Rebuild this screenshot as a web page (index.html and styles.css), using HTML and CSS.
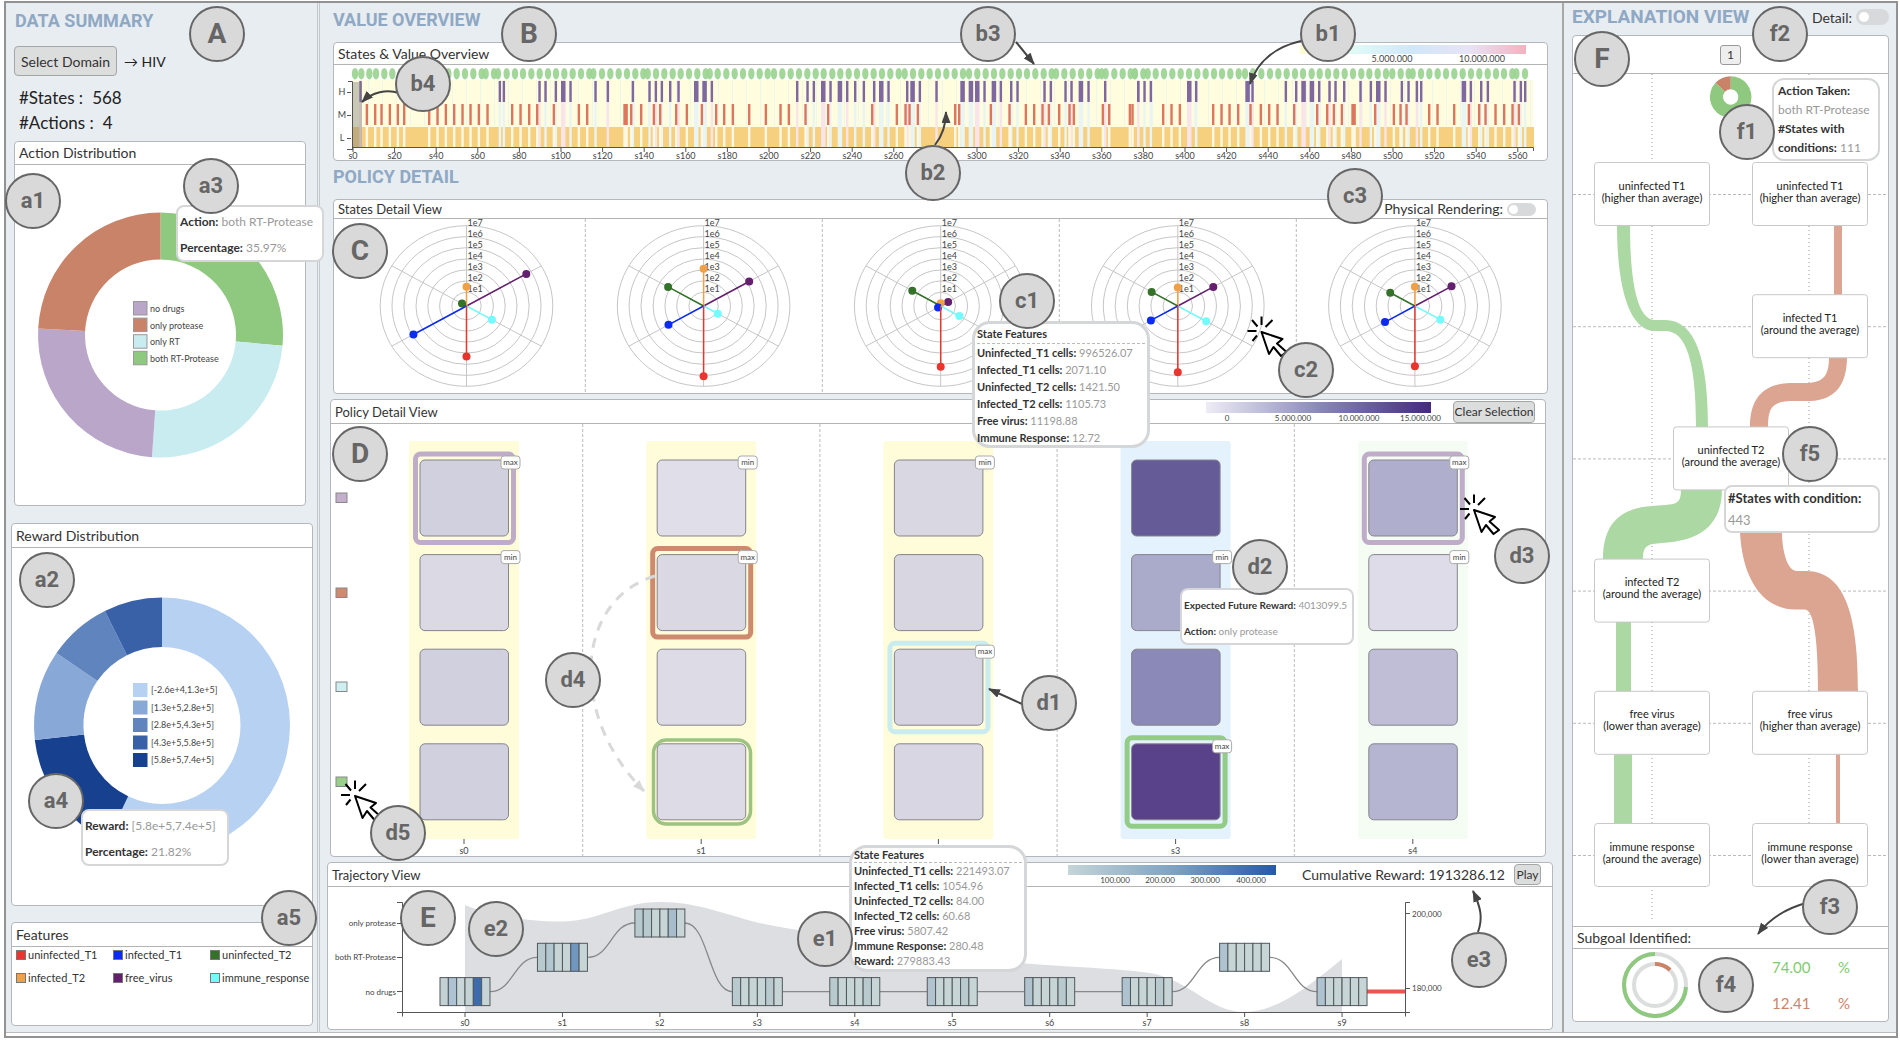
FILE: index.html
```html
<!DOCTYPE html>
<html lang="en">
<head>
<meta charset="utf-8">
<title>Policy Explorer</title>
<link rel="stylesheet" href="styles.css">
</head>
<body>
<div class="page">
  <div class="dashboard">
    <aside class="sidebar">
      <h2 class="title">DATA SUMMARY</h2>
      <div class="domain"><button type="button" class="btn btn-domain">Select Domain</button><span>→ HIV</span></div>
      <dl class="stats">
        <div><dt>#States :</dt><dd>568</dd></div>
        <div><dt>#Actions :</dt><dd>4</dd></div>
      </dl>
      <section class="card card-action">
        <h3 class="card-head">Action Distribution</h3>
        <svg class="chart" id="action-donut" viewBox="15 165 290 340"></svg>
      </section>
      <section class="card card-reward">
        <h3 class="card-head">Reward Distribution</h3>
        <svg class="chart" id="reward-donut" viewBox="12 548 300 357"></svg>
      </section>
      <section class="card card-features">
        <h3 class="card-head">Features</h3>
        <ul class="features">
          <li><i class="sw sw-red"></i>uninfected_T1</li>
          <li><i class="sw sw-blue"></i>infected_T1</li>
          <li><i class="sw sw-green"></i>uninfected_T2</li>
          <li><i class="sw sw-orange"></i>infected_T2</li>
          <li><i class="sw sw-purple"></i>free_virus</li>
          <li><i class="sw sw-cyan"></i>immune_response</li>
        </ul>
      </section>
    </aside>

    <main class="main">
      <h2 class="title">VALUE OVERVIEW</h2>
      <section class="card card-overview">
        <div class="card-head">
          <h3>States &amp; Value Overview</h3>
          <svg class="scale" width="226" height="20" viewBox="1300 45 226 20">
            <defs><linearGradient id="g-value"><stop offset="0" stop-color="#fffbd0"/><stop offset=".25" stop-color="#dff9f8"/><stop offset=".5" stop-color="#d0e7f8"/><stop offset=".75" stop-color="#e8e3f6"/><stop offset="1" stop-color="#f3b2bf"/></linearGradient></defs>
            <rect x="1300" y="46" width="226" height="9" fill="url(#g-value)"/>
            <text class="tick mid" x="1392" y="63">5.000.000</text><text class="tick mid" x="1482" y="63">10.000.000</text>
          </svg>
        </div>
        <svg class="chart" id="overview" viewBox="334 65 1213 95"></svg>
      </section>
      <h2 class="title title-policy">POLICY DETAIL</h2>
      <section class="card card-states">
        <div class="card-head">
          <h3>States Detail View</h3>
          <label class="switch">Physical Rendering:<input type="checkbox"></label>
        </div>
        <svg class="chart" id="radials" viewBox="334 219 1213 174"></svg>
      </section>
      <section class="card card-policy">
        <div class="card-head">
          <h3>Policy Detail View</h3>
          <svg class="scale" width="236" height="22" viewBox="1206 401 236 22">
            <defs><linearGradient id="g-policy"><stop offset="0" stop-color="#eeecf5"/><stop offset=".25" stop-color="#bdbcd9"/><stop offset=".5" stop-color="#8a88b9"/><stop offset=".75" stop-color="#655a9b"/><stop offset="1" stop-color="#452a7c"/></linearGradient></defs>
            <rect x="1206" y="402" width="225" height="11" fill="url(#g-policy)"/>
            <text class="tick-sm mid" x="1227" y="421">0</text><text class="tick-sm mid" x="1293" y="421">5.000.000</text><text class="tick-sm mid" x="1359" y="421">10.000.000</text><text class="tick-sm end" x="1441" y="421">15.000.000</text>
          </svg>
          <button type="button" class="btn btn-clear">Clear Selection</button>
        </div>
        <svg class="chart" id="policy" viewBox="331 424 1214 432"></svg>
      </section>
      <section class="card card-trajectory">
        <div class="card-head">
          <h3>Trajectory View</h3>
          <svg class="scale" width="208" height="21" viewBox="1069 865 208 21">
            <defs><linearGradient id="g-traj"><stop offset="0" stop-color="#c5d5d8"/><stop offset=".5" stop-color="#7fa3c2"/><stop offset="1" stop-color="#2659a6"/></linearGradient></defs>
            <rect x="1069" y="866" width="208" height="10" fill="url(#g-traj)"/>
            <text class="tick-sm mid" x="1116" y="884">100.000</text><text class="tick-sm mid" x="1161" y="884">200.000</text><text class="tick-sm mid" x="1206" y="884">300.000</text><text class="tick-sm mid" x="1252" y="884">400.000</text>
          </svg>
          <span class="cumulative">Cumulative Reward: <output>1913286.12</output></span>
          <button type="button" class="btn btn-play">Play</button>
        </div>
        <svg class="chart" id="trajectory" viewBox="328 887 1224 142"></svg>
      </section>
    </main>

    <aside class="explain">
      <div class="explain-top">
        <h2 class="title title-wide">EXPLANATION VIEW</h2>
        <label class="switch switch-lg">Detail:<input type="checkbox"></label>
      </div>
      <section class="card card-explain">
        <div class="card-head step-head"><button type="button" class="step">1</button></div>
        <svg class="chart" id="flow" viewBox="1573 74 315 852"></svg>
        <h3 class="subgoal">Subgoal Identified:</h3>
        <div class="goal">
          <svg width="68" height="68" viewBox="-34 -34 68 68">
            <circle class="ring" r="31"/><circle class="ring" r="21"/>
            <path class="arc-green" d="M0 -31A31 31 0 1 0 31 2"/>
            <path class="arc-brown" d="M0 -21A21 21 0 0 1 15 -15"/>
          </svg>
          <dl class="rates">
            <div class="rate-green"><dt>74.00</dt><dd>%</dd></div>
            <div class="rate-brown"><dt>12.41</dt><dd>%</dd></div>
          </dl>
        </div>
      </section>
    </aside>
  </div>

  <div class="notes" id="notes">
    <div class="tip tip-pair" data-x="176" data-y="205"><p><b>Action:</b> both RT-Protease</p><p><b>Percentage:</b> 35.97%</p></div>
    <div class="tip tip-pair" data-x="81" data-y="809"><p><b>Reward:</b> [5.8e+5,7.4e+5]</p><p><b>Percentage:</b> 21.82%</p></div>
    <div class="tip tip-state" data-x="972" data-y="321"><h4>State Features</h4>
      <p><b>Uninfected_T1 cells:</b> 996526.07</p><p><b>Infected_T1 cells:</b> 2071.10</p><p><b>Uninfected_T2 cells:</b> 1421.50</p><p><b>Infected_T2 cells:</b> 1105.73</p><p><b>Free virus:</b> 11198.88</p><p><b>Immune Response:</b> 12.72</p></div>
    <div class="tip tip-state tip-dense" data-x="849" data-y="845"><h4>State Features</h4>
      <p><b>Uninfected_T1 cells:</b> 221493.07</p><p><b>Infected_T1 cells:</b> 1054.96</p><p><b>Uninfected_T2 cells:</b> 84.00</p><p><b>Infected_T2 cells:</b> 60.68</p><p><b>Free virus:</b> 5807.42</p><p><b>Immune Response:</b> 280.48</p><p><b>Reward:</b> 279883.43</p></div>
    <div class="tip tip-pair tip-future" data-x="1180" data-y="588"><p><b>Expected Future Reward:</b> 4013099.5</p><p><b>Action:</b> only protease</p></div>
    <div class="tip tip-taken" data-x="1772" data-y="78"><p><b>Action Taken:</b></p><p>both RT-Protease</p><p><b>#States with</b></p><p><b>conditions:</b> 111</p></div>
    <div class="tip tip-cond" data-x="1724" data-y="485"><p><b>#States with condition:</b></p><p>443</p></div>
    <svg class="arrows" viewBox="0 0 1900 1038" preserveAspectRatio="none" id="arrows"></svg>
  </div>
</div>
<script src="script.js"></script>
</body>
</html>
```
FILE: styles.css
```css
* { box-sizing: border-box; }
body { margin: 0; background: #fff; color: #333; font-family: Lato, "Open Sans", sans-serif; font-size: 14px; }
h2, h3, h4, p, dl, dd, ul { margin: 0; padding: 0; font-weight: normal; }
ul { list-style: none; }

.page { position: relative; padding: 1px 2px 0 4px; }
.dashboard { display: grid; grid-template-columns: 314px minmax(0, 1fr) 334px; border: 2px solid #929292; padding-bottom: 3px; background: #fff; }
.sidebar, .main, .explain { background: #e8edf2; border-bottom: 1px solid #bbb; }

.title { color: #8fa8c4; font: bold 18px/24px Roboto, sans-serif; }
.title-wide { font-size: 19px; }

.btn { padding: 0; border: 1px solid #a5a5a5; border-radius: 4px; background: #dcdddd; color: #333; font-family: inherit; font-size: 12px; white-space: nowrap; }
.btn-domain { width: 103px; height: 30px; font-size: 14px; }
.btn-clear { width: 82px; height: 22px; }
.btn-play { width: 27px; height: 21px; }

.card { border: 1px solid #b4b8bc; border-radius: 4px; background: #fff; overflow: hidden; }
.card-head { display: flex; align-items: center; border-bottom: 1px solid #b4b4b4; padding-left: 4px; height: 23px; font-size: 14px; line-height: 20px; color: #333; }
.card-head h3 { font-size: 14px; }
.chart { display: block; width: 100%; height: auto; overflow: visible; }
.scale { margin-left: auto; }

/* sidebar */
.sidebar { padding: 6px 4px 0 5px; border-right: 3px double #c4c8cc; }
.sidebar .title { padding-left: 4px; }
.domain { display: flex; align-items: center; gap: 7px; margin: 13px 0 0 3px; color: #222; }
.stats { margin: 9px 0 6px 8px; font-size: 17px; line-height: 25px; color: #222; }
.stats div { display: flex; gap: 9px; }
.card-action { margin: 0 7px 0 3px; }
.card-reward { margin-top: 17px; }
.card-features { margin-top: 16px; }
.card-reward .card-head, .card-features .card-head { height: 24px; }
.features { display: grid; grid-template-columns: 97px 97px 1fr; row-gap: 7px; padding: 0 0 39px 4px; font-size: 11px; line-height: 16px; }
.features li { display: flex; align-items: center; gap: 2px; white-space: nowrap; }
.sw { width: 10px; height: 10px; border: 1px solid #777; }
.sw-red { background: #e8352e; } .sw-blue { background: #0b2bf2; } .sw-green { background: #34722a; }
.sw-orange { background: #f0a047; } .sw-purple { background: #64206f; } .sw-cyan { background: #74fbfd; }

/* main column */
.main { padding: 5px 0 2px; }
.main .title { padding-left: 13px; }
.card-overview, .card-states { margin: 10px 14px 0 13px; }
.card-overview .card-head { height: 22px; }
.card-overview .scale { margin-right: 21px; }
.title-policy { margin-top: 4px; }
.card-states .card-head { height: 19px; }
.card-policy { margin: 5px 16px 0 10px; }
.card-policy .card-head, .card-trajectory .card-head { height: 24px; }
.card-policy .card-head { padding-right: 10px; gap: 11px; }
.card-trajectory { margin: 5px 9px 0 7px; }
.card-trajectory .card-head { padding-right: 11px; }
.card-states h3, .card-policy h3, .card-trajectory h3 { font-size: 13px; }
.cumulative { width: 201px; margin: 0 11px 0 26px; font-size: 14px; white-space: nowrap; }

.switch { display: flex; align-items: center; gap: 4px; margin: 0 11px 0 auto; font-size: 14px; }
.switch input { appearance: none; margin: 0; width: 29px; height: 13px; padding: 2px; border-radius: 7px; background: #d8d9da; }
.switch input::before { content: ""; display: block; width: 9px; height: 9px; border-radius: 50%; background: #fff; }
.switch-lg { margin-right: 0; }
.switch-lg input { width: 33px; height: 16px; padding: 3px; border-radius: 8px; }
.switch-lg input::before { width: 10px; height: 10px; }

/* explanation column */
.explain { padding: 2px 7px 0 8px; border-left: 2px solid #a8a8a8; }
.explain-top { display: flex; align-items: center; margin-bottom: 6px; height: 24px; }
.step-head { height: 38px; justify-content: center; padding: 0; }
.step { width: 21px; height: 20px; padding: 0; border: 1px solid #999; border-radius: 3px; background: #eee; color: #333; font: 12px Lato, sans-serif; }
.subgoal { border: solid #b4b4b4; border-width: 1px 0; padding-left: 4px; font-size: 14px; line-height: 21px; }
.goal { display: flex; align-items: center; gap: 83px; height: 72px; padding-left: 48px; font-size: 15px; }
.rates div { display: flex; line-height: 36px; }
.rates dt { width: 66px; }
.rate-green { color: #7fcb70; } .rate-brown { color: #cd8468; }
.ring { fill: none; stroke: #dcdddd; stroke-width: 4; }
.arc-green { fill: none; stroke: #8fc97f; stroke-width: 4; }
.arc-brown { fill: none; stroke: #c98369; stroke-width: 4; }

/* svg text and marks */
svg text { font-family: Lato, sans-serif; fill: #444; }
svg .tick { font-size: 9px; }
svg .tick-sm { font-size: 8px; }
svg .node { font-size: 11px; fill: #222; text-anchor: middle; }
svg .mid { text-anchor: middle; }
svg .end { text-anchor: end; }
.axis { stroke: #555; stroke-width: 1; fill: none; }
.grid { stroke: #c6c6c6; fill: none; }
.dash { stroke: #bbb; stroke-dasharray: 3 2; }
.dots { stroke: #ccc; stroke-width: 2; stroke-dasharray: 1 3; }
.box { fill: #fff; stroke: #c8c8c8; stroke-width: 1; }

/* notes laid over the views */
.notes { position: absolute; inset: 0; pointer-events: none; }
.arrows { position: absolute; inset: 0; width: 100%; height: 100%; }
.pin { position: absolute; width: 56px; height: 56px; margin: -28px 0 0 -28px; border: 2px solid #666; border-radius: 50%; background: #d9d9d9; color: #666; font: bold 22px/52px Roboto, sans-serif; text-align: center; }
.pin-major { font-size: 28px; }
.tip { position: absolute; border: 2px solid #d4d6d8; border-radius: 8px; background: #fff; color: #999; white-space: nowrap; }
.tip b, .tip h4 { color: #333; font-weight: bold; }
.tip-pair { width: 148px; height: 57px; padding: 2px 0 0 2px; font-size: 12px; line-height: 26px; }
.tip-future { width: 174px; font-size: 10px; }
.tip-state { width: 178px; height: 127px; padding: 1px 2px; border-width: 3px; border-radius: 18px; font-size: 11px; line-height: 17px; }
.tip-state h4 { border-bottom: 1px dashed #bbb; line-height: 18px; }
.tip-dense { padding-top: 0; line-height: 15px; }
.tip-dense h4 { line-height: 14px; }
.tip-taken { width: 108px; height: 83px; padding: 1px 4px; border-radius: 12px; font-size: 12px; line-height: 19px; }
.tip-cond { width: 156px; height: 48px; padding: 0 2px; font-size: 13px; line-height: 22px; }
```
FILE: script.js
```js
const el = id => document.getElementById(id);
const put = (id, markup) => { el(id).innerHTML += markup; };
const range = n => [...Array(n).keys()];

/* donuts */
function wedge(cx, cy, R, r, a0, a1, fill) {
  const p = (rad, a) => {
    const t = (a - 90) * Math.PI / 180;
    return (cx + rad * Math.cos(t)).toFixed(2) + ' ' + (cy + rad * Math.sin(t)).toFixed(2);
  };
  const big = a1 - a0 > 180 ? 1 : 0;
  return `<path fill="${fill}" d="M${p(R, a0)}A${R} ${R} 0 ${big} 1 ${p(R, a1)}L${p(r, a1)}A${r} ${r} 0 ${big} 0 ${p(r, a0)}Z"/>`;
}
const GREEN = '#8fc97f', CYAN = '#c9ecf0', PURPLE = '#baa6c8', BROWN = '#c98369';
put('action-donut',
  [[0, 95, GREEN], [95, 184, CYAN], [184, 273, PURPLE], [273, 360, BROWN]]
    .map(([a, b, c]) => wedge(160.5, 335, 122.5, 75.5, a, b, c)).join('') +
  [['no drugs', PURPLE], ['only protease', BROWN], ['only RT', CYAN], ['both RT-Protease', GREEN]]
    .map(([t, c], i) => `<rect x="133.5" y="${301.5 + i * 16.6}" width="13.5" height="13.5" fill="${c}" stroke="#999"/><text class="tick" x="150" y="${312 + i * 16.6}">${t}</text>`).join(''));
const BLUES = ['#b6d1f1', '#88a9d7', '#6084bd', '#3961a8', '#17418f'];
put('reward-donut',
  [[0, 205.5, 0], [205.5, 263.5, 4], [263.5, 304.5, 1], [304.5, 333.5, 2], [333.5, 360, 3]]
    .map(([a, b, c]) => wedge(162, 725.5, 128, 78.5, a, b, BLUES[c])).join('') +
  ['[-2.6e+4,1.3e+5]', '[1.3e+5,2.8e+5]', '[2.8e+5,4.3e+5]', '[4.3e+5,5.8e+5]', '[5.8e+5,7.4e+5]']
    .map((t, i) => `<rect x="133" y="${683 + i * 17.5}" width="14.5" height="14" fill="${BLUES[i]}"/><text class="tick" x="151" y="${693 + i * 17.5}">${t}</text>`).join(''));

/* overview strip: three scan segments, each measured in thirds of a unit; a negative entry is a wide bar */
const segs = [
  { o: 320,
    dot: [105,124,148,168,193,217,242,267,292,316,341,366,385,410,435,460,485,497,522,534,560,585,609,634,659,684,708,733,758,783,808,820,846,871,896,921,946,970,983,1008,1033,1058,1082,1107,1132,1157,1169,1193],
    hi: [118,536,548,655,673,704,-723,748,823,860,935,985,1004,1022,1047,1072,-1122,-1147,1172],
    md: [137,162,181,206,230,249,324,349,374,399,424,448,473,499,573,598,624,648,698,773,798,-910,930,960,998,1017,1065,1097,1142,1185] },
  { o: 720,
    dot: [19,44,69,94,119,143,162,187,212,237,262,287,311,337,361,386,411,436,461,486,511,536,554,579,604,629,654,679,704,729,747,772,797,822,847,872,897,921,946,971,995,1008,1033,1058,1083,1108,1133,1145,1157,1183,1208,1232,1245],
    hi: [228,259,278,-303,328,-353,378,402,428,459,-477,502,558,-571,596,646,-721,-746,-765,790,-815,839,870,889,970,989,1033,1051,-1076,1102,1152,1251],
    md: [9,35,84,134,178,203,253,321,453,527,553,565,590,702,714,809,865,914,939,964,983,1014,1045,1058,1145,1164,1226] },
  { o: 1130,
    dot: [14,40,53,77,102,127,152,177,202,227,252,276,301,326,345,369,394,420,445,470,495,519,545,569,594,619,644,669,694,718,743,768,787,812,836,848,873,898,923,948,973,998,1023,1048,1073,1098,1122,1147,1159,1185],
    hi: [21,40,59,-171,195,-346,364,464,495,-514,-539,564,595,613,639,688,719,-738,763,812,832,857,870,-995,1019,1050,1070,1150,1169,1182],
    md: [-4,96,121,146,246,271,295,321,358,389,414,439,489,558,588,608,632,-664,732,788,808,826,894,919,969,1013,1044,1063,1093,1119,1144,1163] }
];
let ground = '<rect x="353" y="80" width="1180" height="67" fill="#fffddd"/><rect x="353" y="127" width="1181" height="20" fill="#f6d07e"/>', marks = '';
range(84).forEach(i => { ground += `<rect x="${368 + i * 14}" y="80" width="1" height="46" fill="#edf6ea"/>`; });
segs.forEach(({ o, dot, hi, md }) => {
  hi.forEach((v, i) => {
    const x = o + Math.abs(v) / 3, w = v < 0 ? 4.5 : 2.4;
    ground += `<rect x="${x}" y="80" width="${w}" height="67" fill="${i % 3 === 0 ? '#f8e4ea' : '#e9f4f5'}"/>`;
    marks += `<rect x="${x}" y="81" width="${w}" height="21" fill="#7f679f"/>`;
  });
  md.forEach(v => {
    const x = o + Math.abs(v) / 3, w = v < -5 ? 4.5 : 2.4;
    ground += `<rect x="${x}" y="126" width="${w}" height="21" fill="#fdf8e3"/>`;
    marks += `<rect x="${x}" y="104" width="${w}" height="21" fill="#dc765f"/>`;
  });
  dot.forEach(v => { marks += `<ellipse cx="${o + v / 3}" cy="73.7" rx="3.2" ry="5.8" fill="#9bd491" fill-opacity=".92"/>`; });
});
put('overview', ground + marks +
  '<rect x="353" y="82" width="9" height="66" fill="#777" fill-opacity=".4"/>' +
  '<path class="axis" d="M348 81.5H352.5V150M347 149.5H353M353 147.5H1533.5V151M347 92.5H351M347 115.5H351M347 138.5H351"/>' +
  [['H', 92], ['M', 115], ['L', 138]].map(([t, y]) => `<text class="tick mid" x="342" y="${y + 3}">${t}</text>`).join('') +
  range(29).map(i => { const x = 353 + i * 41.6; return `<path class="axis" d="M${x} 148v4"/><text class="tick mid" x="${x}" y="159">s${i * 20}</text>`; }).join(''));

/* radial state plots */
const FEAT = ['#64206f', '#f0a047', '#34722a', '#0b2bf2', '#74fbfd', '#e8352e'];
const DIR = [[.866, -.5], [0, -1], [-.866, -.5], [-.866, .5], [.866, .5], [0, 1]];
const states = [
  [.80, .24, .06, .71, .34, .63], [.61, .465, .475, .47, .19, .875], [.10, .035, .38, .035, .25, .755],
  [.475, .23, .35, .36, .38, .825], [.49, .24, .33, .40, .34, .75]];
const rings = [13.7, 25, 36, 47, 58.3, 69.3, 80.3], CY = 306, STEP = 237.1, RX = 86.3, RY = 80.3;
put('radials', states.map((vals, i) => {
  const cx = 466.5 + i * STEP;
  return rings.map(r => `<ellipse class="grid" cx="${cx}" cy="${CY}" rx="${r * RX / RY}" ry="${r}"/>`).join('') +
    DIR.map(([x, y]) => `<path class="grid" d="M${cx} ${CY}L${cx + x * RX} ${CY + y * RY}"/>`).join('') +
    rings.map((r, k) => `<text class="tick" x="${cx + 1}" y="${CY - r}">1e${k + 1}</text>`).join('') +
    vals.map((v, k) => `<path d="M${cx} ${CY}L${cx + DIR[k][0] * RX * v} ${CY + DIR[k][1] * RY * v}" stroke="${FEAT[k]}" stroke-width="1.5"/><circle cx="${cx + DIR[k][0] * RX * v}" cy="${CY + DIR[k][1] * RY * v}" r="4" fill="${FEAT[k]}"/>`).join('');
}).join('') + range(4).map(i => `<path class="dash" d="M${585.3 + i * 237} 219V392"/>`).join(''));

/* policy matrix */
const matrix = [
  { bg: '#fffcd9', c: ['#d1d0de', '#dad9e4', '#d1d0de', '#d1d0df'], max: 0, min: 1, sel: '#bfacc9' },
  { bg: '#fffcd9', c: ['#e0dee8', '#dad8e3', '#dddbe5', '#dddbe6'], max: 1, min: 0, sel: '#cd8a6f' },
  { bg: '#fffcd9', c: ['#d9d7e2', '#d8d6e1', '#d6d4e1', '#d8d6e2'], max: 2, min: 0, sel: '#cbecee' },
  { bg: '#e4f2fd', c: ['#655b97', '#aaaaca', '#8b89b7', '#594289'], max: 3, min: 1, sel: '#93cc86' },
  { bg: '#f5fcf4', c: ['#afaecc', '#dddce8', '#c0bed6', '#b5b5d2'], max: 0, min: 1, sel: '#bfacc9' }];
const tag = (x, y, t) => `<rect x="${x + 92}" y="${y - 4}" width="19" height="13" rx="3" fill="#fff" stroke="#aaa"/><text class="tick-sm mid" x="${x + 101.5}" y="${y + 5}">${t}</text>`;
put('policy', matrix.map((m, i) => {
  const x = 409 + i * 237.2, yAt = r => 460 + r * 94.6;
  return `<rect x="${x}" y="441" width="110" height="398" rx="3" fill="${m.bg}"/>` +
    `<rect x="${x + 6.5}" y="${yAt(m.max) - 6}" width="98" height="88.5" rx="5" fill="none" stroke="${m.sel}" stroke-width="5"/>` +
    m.c.map((c, r) => `<rect x="${x + 11}" y="${yAt(r)}" width="88.5" height="76" rx="5" fill="${c}" stroke="#85858c"/>`).join('') +
    tag(x, yAt(m.max), 'max') + tag(x, yAt(m.min), 'min') +
    `<path class="axis" d="M${x + 55} 839v5"/>` +
    (i === 2 ? '' : `<text class="tick mid" x="${x + 55}" y="854">s${i}</text>`) +
    (i ? `<path class="dash" d="M${x - 63.5} 424V856"/>` : '');
}).join('') +
  '<rect x="653.5" y="740" width="97" height="84" rx="13" fill="none" stroke="#9cc382" stroke-width="3.5"/>' +
  [[493, '#c3aecb'], [588, '#d08a70'], [682, '#cfeef1'], [777, '#98d08a']].map(([y, c]) => `<rect x="336" y="${y}" width="11" height="9.5" fill="${c}" stroke="#888"/>`).join(''));

/* trajectory */
const N = '#c8d5d7', P = '#b9cacf';
const steps = [
  [2, ['#c3d1d4', '#adc3d3', '#cad7d8', '#c5d3d5', '#3d6cac', N]], [1, [P, '#b3c7d1', N, N, '#7197be', N]],
  [0, [P, P, N, N, '#a8bdcb', N]], [2, [P, N, N, N, P, N]], [2, [P, N, N, N, P, N]], [2, ['#b0c3ce', N, N, N, P, N]],
  [2, ['#b0c3ce', N, N, N, P, N]], [2, ['#aec2d0', N, N, N, P, N]], [1, ['#aec2d0', N, N, N, N, N]], [2, ['#aec2d0', N, N, N, N, N]]];
const sx = i => 465 + i * 97.45, sy = r => 923 + r * 34.3;
put('trajectory',
  '<path fill="#dddee2" d="M465 905C490 916 530 922 562 921.5C600 921 620 902 660 902C705 902 735 920 780 927C860 941 900 950 960 957C1030 966 1110 967 1150 973C1190 980 1210 1012 1244 1012C1278 1012 1310 985 1342 959V1012.5H465Z"/>' +
  '<path class="axis" d="M397 902.5H402.5V1016.5M397 1012.5H1410M397 923.5H402M397 957.5H402M397 991.5H402M1410 902.5H1405.5V1016.5M1405 913.5H1410M1405 988.5H1410"/>' +
  ['only protease', 'both RT-Protease', 'no drugs'].map((t, i) => `<text class="tick-sm end" x="396" y="${926 + i * 34.3}">${t}</text>`).join('') +
  '<text class="tick-sm" x="1412" y="917">200,000</text><text class="tick-sm" x="1412" y="991">180,000</text>' +
  steps.slice(1).map(([r], k) => { const x0 = sx(k) + 25, x1 = sx(k + 1) - 25, y0 = sy(steps[k][0]), y1 = sy(r), m = (x0 + x1) / 2; return `<path d="M${x0} ${y0}C${m} ${y0} ${m} ${y1} ${x1} ${y1}" fill="none" stroke="#888" stroke-width="1.3"/>`; }).join('') +
  '<path d="M1367 991.6H1405" stroke="#ec5550" stroke-width="4"/>' +
  steps.map(([r, c], i) => c.map((f, k) => `<rect x="${sx(i) - 25 + k * 8.33}" y="${sy(r) - 14}" width="8.33" height="28" fill="${f}" stroke="#50585c"/>`).join('') +
    `<path class="axis" d="M${sx(i)} 1013v4"/><text class="tick mid" x="${sx(i)}" y="1026">s${i}</text>`).join(''));

/* explanation flow */
const nodes = [[1594, 0, 'uninfected T1', 'higher than'], [1752, 0, 'uninfected T1', 'higher than'], [1752, 1, 'infected T1', 'around the'],
  [1673, 2, 'uninfected T2', 'around the'], [1594, 3, 'infected T2', 'around the'], [1594, 4, 'free virus', 'lower than'],
  [1752, 4, 'free virus', 'higher than'], [1594, 5, 'immune response', 'around the'], [1752, 5, 'immune response', 'lower than']];
put('flow',
  '<path class="dots" d="M1652 74V922M1809 74V862"/>' +
  range(6).map(i => `<path class="dash" d="M1573 ${194.5 + i * 132.2}H1888"/>`).join('') +
  '<g fill="#acd8a3"><path d="M1617 225C1617 290 1630 331 1655 331H1665C1686 331 1696 360 1696 427H1708C1708 360 1696 320 1665 320H1655C1638 320 1630 285 1630 225Z"/>' +
  '<path d="M1722 489C1722 525 1700 541 1662 543C1648 544 1643 545 1643 559H1603C1603 522 1622 508 1652 506L1665 505C1678 504 1681 502 1681 489Z"/>' +
  '<path d="M1616 621h15v71h-15zM1614 753h18v71h-18z"/></g>' +
  '<g fill="#dba591"><path d="M1834 225h8v71h-8zM1836 753h4v71h-4z"/>' +
  '<path d="M1829 357C1829 375 1824 382 1808 383H1790C1762 384 1750 400 1750 427H1768C1768 408 1772 402 1790 401H1810C1835 400 1847 385 1847 357Z"/>' +
  '<path d="M1740 489V532C1742 575 1760 609 1795 609.5H1805C1814 610 1818 640 1818 691H1858C1858 620 1847 571 1806 571H1797C1787 571 1782 550 1782 532V489Z"/></g>' +
  wedge(1730.7, 97, 20.8, 7.7, 0, 313, GREEN) + wedge(1730.7, 97, 20.8, 7.7, 313, 360, BROWN) +
  nodes.map(([x, r, a, b]) => { const y = 162.5 + r * 132.2; return `<rect class="box" x="${x + .5}" y="${y}" width="115" height="63" rx="3"/><text class="node" x="${x + 58}" y="${y + 27}">${a}</text><text class="node" x="${x + 58}" y="${y + 39}">(${b} average)</text>`; }).join(''));

/* arrows, pointers and pins */
const cursor = (x, y) => `<g transform="translate(${x} ${y})" stroke="#000" stroke-width="2"><path fill="#fff" stroke-linejoin="round" d="M0 0L21 7L15.5 11.5L25 20L19.5 24L12 15L7.5 22Z"/><path fill="none" d="M0 -15.5V-7M11 -12L4 -5M-9.5 -12L-4 -5.5M-14 -1H-5M-9 9L-4.5 3.5"/></g>`;
const head = (id, c) => `<marker id="${id}" viewBox="0 0 12 9" refX="11" refY="4.5" markerWidth="12" markerHeight="9" markerUnits="userSpaceOnUse" orient="auto"><path d="M0 0L12 4.5L0 9Z" fill="${c}"/></marker>`;
put('arrows', `<defs>${head('tip', '#444')}${head('tip-light', '#d9d9d9')}</defs>` +
  ['M399 93C387 89 372 92 362 102', 'M1301 41C1275 47 1257 62 1250 84', 'M1016 42L1034 64', 'M935 145C942 136 946 126 946 112',
    'M1022 704L989 689', 'M1478 932C1483 918 1481 908 1473 891', 'M1806 903C1788 908 1770 918 1758 934']
    .map(d => `<path d="${d}" fill="none" stroke="#444" stroke-width="2" marker-end="url(#tip)"/>`).join('') +
  '<path d="M655 576C575 600 568 715 644 791" fill="none" stroke="#d9d9d9" stroke-width="3" stroke-dasharray="10 8" marker-end="url(#tip-light)"/>' +
  cursor(1261.5, 332) + cursor(1474, 510) + cursor(355, 796));

const pins = { A: [217, 34], a1: [33, 201], a3: [211, 186], a2: [47, 580], a4: [56, 801], a5: [289, 918], B: [529, 34], b4: [423, 84], b3: [988, 34], b2: [933, 173], b1: [1328, 34],
  c3: [1355, 196], C: [360, 251], c1: [1027, 301], c2: [1306, 370], D: [360, 454], d4: [573, 680], d5: [398, 833], d2: [1260, 567], d1: [1049, 703], d3: [1522, 556],
  E: [428, 918], e2: [496, 929], e1: [825, 939], e3: [1479, 960], F: [1602, 59], f2: [1780, 34], f1: [1747, 132], f5: [1810, 454], f3: [1830, 907], f4: [1726, 985] };
const place = (node, x, y) => { node.style.left = (x / 19).toFixed(3) + '%'; node.style.top = y + 'px'; };
Object.entries(pins).forEach(([name, [x, y]]) => {
  const pin = document.createElement('span');
  pin.className = name.length === 1 ? 'pin pin-major' : 'pin';
  pin.textContent = name;
  place(pin, x, y);
  el('notes').append(pin);
});
document.querySelectorAll('.tip').forEach(t => place(t, +t.dataset.x, +t.dataset.y));
```
